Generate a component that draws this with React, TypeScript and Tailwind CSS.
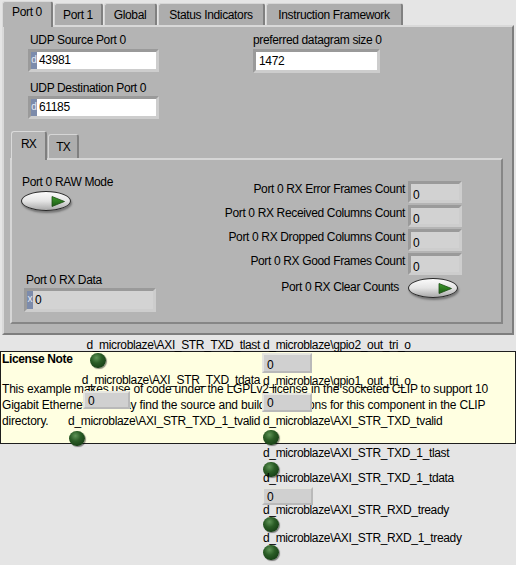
import React from 'react';

type NumProps = {
  value: string;
  radix?: string;
  size: string;
  fill: string;
  text?: string;
};

function NumCtrl({ value, radix, size, fill, text = 'leading-[17px]' }: NumProps) {
  return (
    <div className={`flex ${size} border-[3px] border-t-[#9a9a9a] border-l-[#9a9a9a] border-b-[#cdcdcd] border-r-[#cdcdcd]`}>
      {radix && (
        <div className="w-[6px] bg-[#7c8bab] text-[#e4e9f4] text-[10px] leading-[16px] flex justify-center overflow-hidden tracking-normal">
          {radix}
        </div>
      )}
      <div className={`flex-1 ${fill} pl-[2px] ${text}`}>{value}</div>
    </div>
  );
}

function SmallNum({ pos }: { pos: string }) {
  return (
    <div className={`absolute ${pos} border-2 border-t-[#e6e6e0] border-l-[#e6e6e0] border-b-[#b9b9b9] border-r-[#b9b9b9] bg-[#d0d0d0] pl-[3px] leading-[14px] pt-[1px]`}>
      0
    </div>
  );
}

function Led({ pos }: { pos: string }) {
  return (
    <div
      className={`absolute ${pos} w-[16px] h-[15px] rounded-full bg-[radial-gradient(circle_at_40%_32%,#5f9457_0%,#2b5d26_38%,#163d15_80%,#0e2a0e_100%)] shadow-[1px_1px_1px_rgba(0,0,0,0.45)]`}
    />
  );
}

function Bool() {
  return (
    <div className="w-[50px] h-[20px] rounded-[50%] border border-[#2a2a2a] bg-[linear-gradient(#fbfbfb,#e4e4e4_50%,#a9a9a9)] shadow-[1px_2px_2px_rgba(0,0,0,0.35)] flex items-center justify-end pr-[5px]">
      <svg width="14" height="11" viewBox="0 0 14 11">
        <defs>
          <linearGradient id="tri" x1="0" y1="0" x2="0" y2="1">
            <stop offset="0" stopColor="#3d9a2c" />
            <stop offset="1" stopColor="#1d5c14" />
          </linearGradient>
        </defs>
        <path d="M1 0.5 L13.5 5.5 L1 10.5 Z" fill="url(#tri)" stroke="#1c4d14" strokeWidth="0.8" strokeLinejoin="round" />
      </svg>
    </div>
  );
}

const counts = [
  'Port 0 RX Error Frames Count',
  'Port 0 RX Received Columns Count',
  'Port 0 RX Dropped Columns Count',
  'Port 0 RX Good Frames Count',
];

export default function App() {
  return (
    <div className="relative w-[516px] h-[565px] overflow-hidden bg-[#e5e5e5] text-black font-['Liberation_Sans',Arial,sans-serif] text-[12px] tracking-[-0.35px] leading-[14px]">
      {/* top tab strip */}
      <div className="flex items-end h-[25px] pl-[2px]">
        <div className="relative z-10 -mb-[2px] w-[51px] h-[26px] bg-[#b4b4b4] rounded-t-[3px] border-t border-l border-[#dadada] border-r-2 border-r-[#7f7f7f] flex justify-center pt-[3px]">
          Port 0
        </div>
        <div className="ml-[1px] w-[49px] h-[22px] bg-[#adadad] rounded-t-[3px] border-t border-l border-[#d6d6d6] border-r-2 border-r-[#808080] flex justify-center pt-[4px]">
          Port 1
        </div>
        <div className="ml-[1px] w-[53px] h-[22px] bg-[#adadad] rounded-t-[3px] border-t border-l border-[#d6d6d6] border-r-2 border-r-[#808080] flex justify-center pt-[4px]">
          Global
        </div>
        <div className="ml-[1px] w-[107px] h-[22px] bg-[#adadad] rounded-t-[3px] border-t border-l border-[#d6d6d6] border-r-2 border-r-[#808080] flex justify-center pt-[4px]">
          Status Indicators
        </div>
        <div className="ml-[1px] w-[137px] h-[22px] bg-[#adadad] rounded-t-[3px] border-t border-l border-[#d6d6d6] border-r-2 border-r-[#808080] flex justify-center pt-[4px]">
          Instruction Framework
        </div>
      </div>

      {/* Port 0 page */}
      <div className="ml-[2px] w-[512px] h-[310px] bg-[#b4b4b4] border-2 border-t-[#d9d9d9] border-l-[#d9d9d9] border-r-[#7e7e7e] border-b-[#7e7e7e] flex flex-col">
        <div className="h-[104px] flex pl-[24px] pt-[6px]">
          <div className="w-[225px] flex flex-col">
            <div className="pl-[2px]">UDP Source Port 0</div>
            <div className="mt-[2px]">
              <NumCtrl value="43981" radix="d" size="w-[131px] h-[23px]" fill="bg-white" />
            </div>
            <div className="mt-[9px] pl-[2px]">UDP Destination Port 0</div>
            <div className="mt-[1px]">
              <NumCtrl value="61185" radix="d" size="w-[131px] h-[23px]" fill="bg-white" />
            </div>
          </div>
          <div className="flex flex-col">
            <div>preferred datagram size 0</div>
            <div className="mt-[2px]">
              <NumCtrl value="1472" size="w-[127px] h-[24px]" fill="bg-white" text="leading-[18px] pl-[3px]" />
            </div>
          </div>
        </div>

        {/* RX / TX tab control */}
        <div className="ml-[6px] w-[493px]">
          <div className="flex items-end h-[27px] pl-[1px]">
            <div className="relative z-10 -mb-[2px] w-[36px] h-[29px] bg-[#b4b4b4] rounded-t-[3px] border-t border-l border-[#dadada] border-r-2 border-r-[#7f7f7f] flex justify-center pt-[5px] tracking-[-0.8px]">
              RX
            </div>
            <div className="ml-[1px] w-[31px] h-[24px] bg-[#adadad] rounded-t-[3px] border-t border-l border-[#d6d6d6] border-r-2 border-r-[#808080] flex justify-center pt-[5px] tracking-[-0.8px]">
              TX
            </div>
          </div>
          <div className="h-[166px] border-2 border-t-[#d6d6d6] border-l-[#d6d6d6] border-r-[#868686] border-b-[#868686] flex justify-between">
            <div className="flex flex-col pl-[10px] pt-[15px] pb-[10px]">
              <div>Port 0 RAW Mode</div>
              <div className="mt-[2px] -ml-[1px]">
                <Bool />
              </div>
              <div className="mt-auto ml-[4px]">Port 0 RX Data</div>
              <div className="mt-[1px] ml-[2px]">
                <NumCtrl value="0" radix="x" size="w-[132px] h-[24px]" fill="bg-[#d3d3d3]" text="leading-[18px]" />
              </div>
            </div>
            <div className="flex flex-col items-end pt-[21px] pr-[39px]">
              {counts.map((c) => (
                <div key={c} className="flex items-start gap-[3px] mb-[2px]">
                  <div className="mt-[1px]">{c}</div>
                  <NumCtrl value="0" size="w-[54px] h-[22px]" fill="bg-[#d2d2d2]" text="leading-[16px] pt-[3px] pl-[2px]" />
                </div>
              ))}
              <div className="flex items-start gap-[9px] mt-[1px] pr-[4px]">
                <div className="mt-[2px]">Port 0 RX Clear Counts</div>
                <Bool />
              </div>
            </div>
          </div>
        </div>
      </div>

      {/* License note */}
      <div className="mt-[16px] w-[516px] h-[93px] border border-[#1e1e1e] bg-[#ffffe1] pl-[1px]">
        <div className="font-bold leading-[14px]">License Note</div>
        <div className="mt-[15px] leading-[16px] whitespace-nowrap tracking-[-0.2px]">
          <div>This example makes use of code under the LGPLv2 license in the socketed CLIP to support 10</div>
          <div>Gigabit Ethernet. You may find the source and build instructions for this component in the CLIP</div>
          <div>directory.</div>
        </div>
      </div>

      {/* FPGA I/O terminals placed freely on the panel */}
      <span className="absolute right-[256px] top-[338px] whitespace-nowrap">{'d_microblaze\\AXI_STR_TXD_tlast'}</span>
      <Led pos="left-[90px] top-[353px]" />
      <span className="absolute right-[256px] top-[373px] whitespace-nowrap">{'d_microblaze\\AXI_STR_TXD_tdata'}</span>
      <SmallNum pos="left-[83px] top-[391px] w-[47px] h-[18px]" />
      <span className="absolute right-[256px] top-[414px] whitespace-nowrap">{'d_microblaze\\AXI_STR_TXD_1_tvalid'}</span>
      <Led pos="left-[69px] top-[431px]" />

      <span className="absolute left-[263px] top-[338px] whitespace-nowrap">{'d_microblaze\\gpio2_out_tri_o'}</span>
      <SmallNum pos="left-[262px] top-[353px] w-[50px] h-[20px] pt-[3px]" />
      <span className="absolute left-[263px] top-[374px] whitespace-nowrap">{'d_microblaze\\gpio1_out_tri_o'}</span>
      <SmallNum pos="left-[262px] top-[393px] w-[50px] h-[19px]" />
      <span className="absolute left-[263px] top-[414px] whitespace-nowrap">{'d_microblaze\\AXI_STR_TXD_tvalid'}</span>
      <Led pos="left-[263px] top-[430px]" />
      <span className="absolute left-[263px] top-[446px] whitespace-nowrap">{'d_microblaze\\AXI_STR_TXD_1_tlast'}</span>
      <Led pos="left-[263px] top-[462px]" />
      <span className="absolute left-[263px] top-[471px] whitespace-nowrap">{'d_microblaze\\AXI_STR_TXD_1_tdata'}</span>
      <SmallNum pos="left-[262px] top-[487px] w-[51px] h-[18px]" />
      <span className="absolute left-[263px] top-[503px] whitespace-nowrap">{'d_microblaze\\AXI_STR_RXD_tready'}</span>
      <Led pos="left-[263px] top-[517px]" />
      <span className="absolute left-[263px] top-[531px] whitespace-nowrap">{'d_microblaze\\AXI_STR_RXD_1_tready'}</span>
      <Led pos="left-[263px] top-[545px]" />
    </div>
  );
}
